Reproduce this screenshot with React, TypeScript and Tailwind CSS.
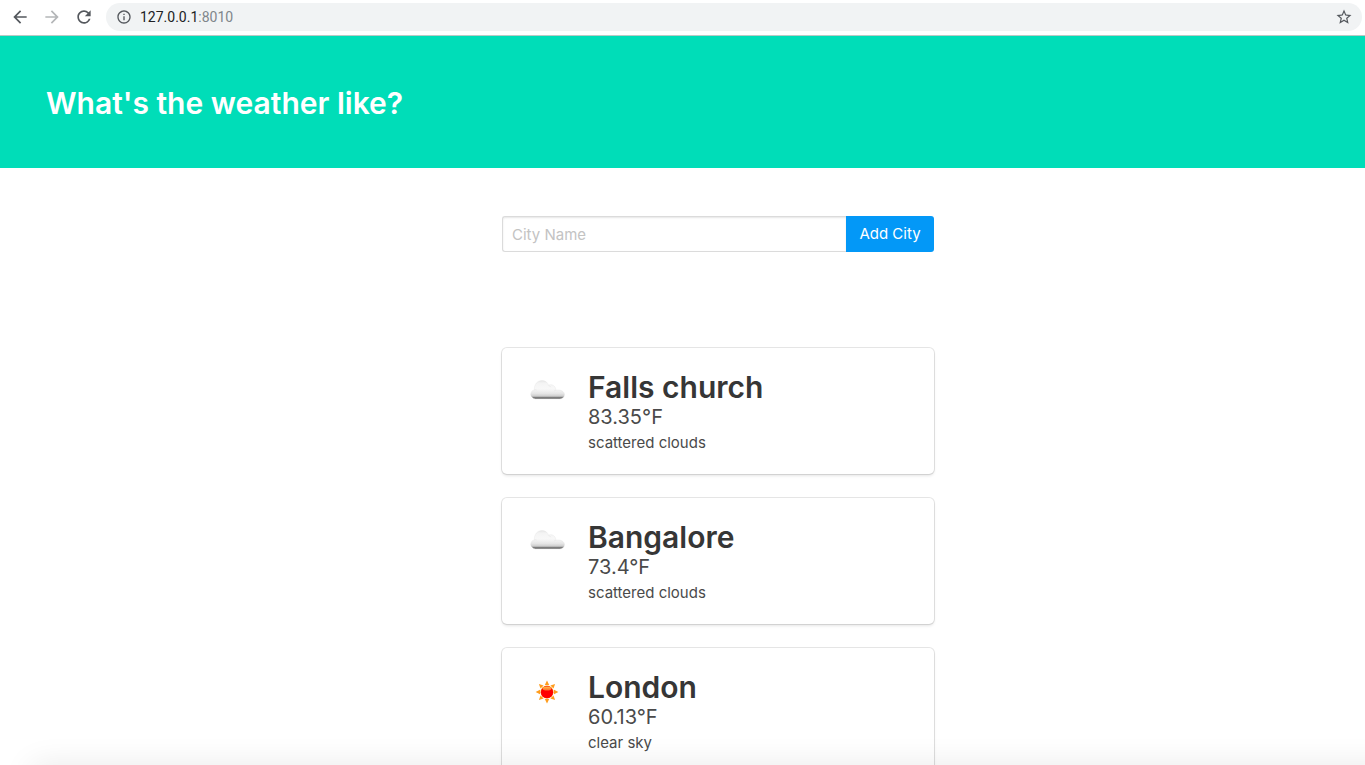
import React from "react";
import { MdArrowBack, MdArrowForward, MdInfoOutline, MdRefresh, MdStarBorder } from "react-icons/md";

type Sky = "clouds" | "sun";

interface City {
  name: string;
  temperature: string;
  description: string;
  sky: Sky;
}

const cities: City[] = [
  { name: "Falls church", temperature: "83.35°F", description: "scattered clouds", sky: "clouds" },
  { name: "Bangalore", temperature: "73.4°F", description: "scattered clouds", sky: "clouds" },
  { name: "London", temperature: "60.13°F", description: "clear sky", sky: "sun" },
];

function CloudIcon({ id }: { id: string }) {
  return (
    <svg viewBox="0 0 50 50" className="size-[50px]" role="img" aria-label="Cloudy">
      <defs>
        <linearGradient id={id} x1="0" y1="0" x2="0" y2="1">
          <stop offset="0" stopColor="#e6e6e6" />
          <stop offset="0.15" stopColor="#f4f4f4" />
          <stop offset="0.45" stopColor="#f8f8f8" />
          <stop offset="0.7" stopColor="#e6e6e6" />
          <stop offset="0.85" stopColor="#cccccc" />
          <stop offset="0.91" stopColor="#7c7c7c" />
          <stop offset="1" stopColor="#808080" />
        </linearGradient>
      </defs>
      <path
        d="M13.500 31C11 30.600 8.700 28.500 8.700 26.200C8.700 23.800 10.200 22.300 12.400 21.900C11.900 16.200 15.800 12.500 19.800 12.500C23.200 12.500 25.700 14.400 26.500 17.200C29.800 15.600 33.600 17.800 34 22.200C38.600 21.200 42.500 23.400 42.500 26.600C42.500 29 40.600 30.700 38 31Z"
        fill={`url(#${id})`}
        stroke="#dcdcdc"
        strokeWidth="0.3"
      />
      <path
        d="M26.500 17.200C27.400 17.600 28.200 18.300 28.600 19.200M12.400 21.900C13.100 21.700 13.900 21.700 14.600 22M34 22.200C33.200 22.400 32.500 22.700 32 23.200"
        fill="none"
        stroke="#e4e4e4"
        strokeWidth="0.6"
      />
    </svg>
  );
}

function SunIcon() {
  const rays = [0, 45, 90, 135, 180, 225, 270, 315];
  return (
    <svg viewBox="0 0 50 50" className="size-[50px]" role="img" aria-label="Sunny">
      <defs>
        <linearGradient id="sun-shine" x1="0" y1="0" x2="0" y2="1">
          <stop offset="0" stopColor="#ffc04a" />
          <stop offset="1" stopColor="#ff6a2a" />
        </linearGradient>
      </defs>
      {rays.map((angle) => (
        <path key={angle} d="M25 12.600L27.200 17H22.800Z" fill="#ff9c1c" transform={`rotate(${angle} 25 24)`} />
      ))}
      <circle cx="25" cy="24" r="6.500" fill="#ff9a1a" />
      <circle cx="25" cy="24.200" r="6.100" fill="#ff0000" />
      <ellipse cx="25" cy="20.400" rx="4.400" ry="2" fill="url(#sun-shine)" />
    </svg>
  );
}

function BrowserBar() {
  return (
    <header className="flex h-9 shrink-0 items-center border-b border-[#b9c9c5] bg-white pr-[3px] pb-px pl-2.5 text-[#54585d]">
      <nav className="flex items-center gap-3" aria-label="Browser">
        <button type="button" aria-label="Back">
          <MdArrowBack className="size-5" />
        </button>
        <button type="button" aria-label="Forward" className="text-[#b4b6b8]">
          <MdArrowForward className="size-5" />
        </button>
        <button type="button" aria-label="Reload">
          <MdRefresh className="size-5" />
        </button>
      </nav>
      <div className="ml-3 flex h-7 flex-1 items-center rounded-full bg-[#f1f3f4] pr-[9px] pl-2.5">
        <MdInfoOutline className="size-4" />
        <p className="flex-1 pl-2 font-['Roboto',sans-serif] text-sm text-[#80868b]">
          <span className="text-[#202124]">127.0.0.1</span>:8010
        </p>
        <button type="button" aria-label="Bookmark this page">
          <MdStarBorder className="size-[18px]" />
        </button>
      </div>
    </header>
  );
}

function CityCard({ city, id }: { city: City; id: string }) {
  return (
    <article className="flex gap-4 rounded-[5px] bg-white px-5 pt-5 pb-[19px] shadow-[0_2px_3px_rgba(10,10,10,0.1),0_0_0_1px_rgba(10,10,10,0.1)]">
      {city.sky === "clouds" ? <CloudIcon id={id} /> : <SunIcon />}
      <div className="pt-px text-[#4a4a4a]">
        <h2 className="text-3xl leading-9 font-semibold text-[#363636]">{city.name}</h2>
        <p className="text-xl leading-6">{city.temperature}</p>
        <p className="mt-0.5 text-[15px] leading-6">{city.description}</p>
      </div>
    </article>
  );
}

export default function App() {
  return (
    <div className="relative flex h-screen flex-col overflow-hidden bg-white font-['Inter',sans-serif]">
      <BrowserBar />
      <section className="shrink-0 bg-[#00ddb8] px-[46px] pt-[49px] pb-[47px]">
        <h1 className="text-3xl leading-9 font-semibold text-white">What's the weather like?</h1>
      </section>
      <main className="min-h-0 flex-1 overflow-hidden pt-12 pl-[71px]">
        <div className="mx-auto flex w-full max-w-[432px] flex-col gap-24">
          <form className="flex text-[15px]" onSubmit={(e) => e.preventDefault()}>
            <input
              type="text"
              aria-label="City Name"
              placeholder="City Name"
              className="h-9 min-w-0 flex-1 rounded-l-[3px] border border-r-0 border-[#dbdbdb] px-[9px] text-[#363636] shadow-[inset_0_1px_2px_rgba(10,10,10,0.1)] outline-none placeholder:text-[#c3c3c3]"
            />
            <button type="submit" className="h-9 w-[88px] rounded-r-[3px] bg-[#0398f7] leading-9 text-white">
              Add City
            </button>
          </form>
          <div className="flex flex-col gap-6">
            {cities.map((city, index) => (
              <CityCard key={city.name} city={city} id={`cloud-${index}`} />
            ))}
          </div>
        </div>
      </main>
      <div className="pointer-events-none absolute -right-10 -bottom-8 left-8 h-8 shadow-[0_0_32px_rgba(0,0,0,0.09)]" />
    </div>
  );
}
